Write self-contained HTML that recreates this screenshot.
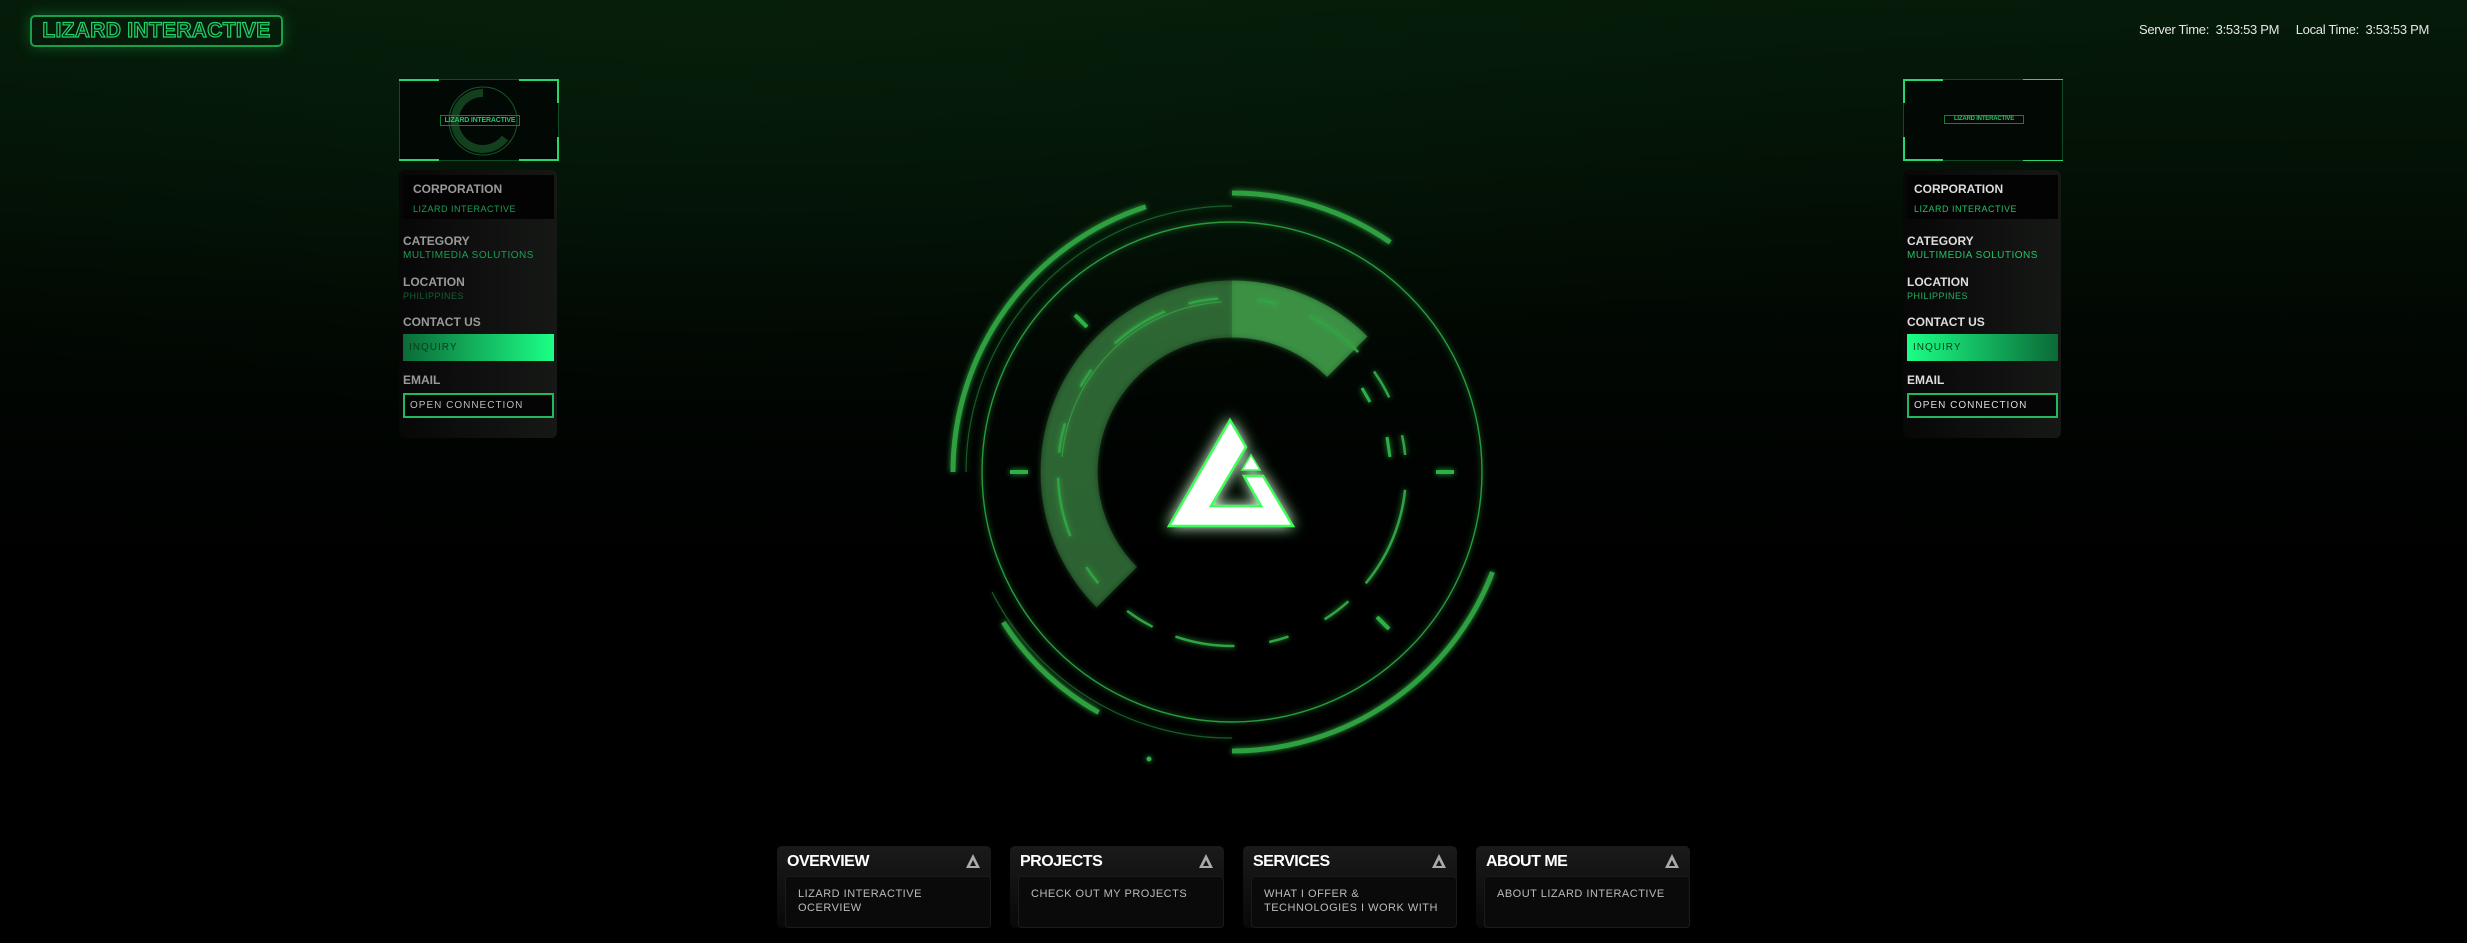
<!DOCTYPE html>
<html><head><meta charset="utf-8"><style>
*{margin:0;padding:0;box-sizing:border-box}
html,body{width:2467px;height:943px;overflow:hidden}
body{background:radial-gradient(ellipse 1400px 420px at 30% 0%,#0a2a0e 0%,#04160a 40%,#010501 80%,#000 100%),#000;font-family:"Liberation Sans",sans-serif;position:relative;color:#ccc}
.bg2{position:absolute;left:0;top:0;width:2467px;height:943px;background:linear-gradient(180deg,rgba(6,30,10,.9) 0%,rgba(2,12,4,.6) 35%,rgba(0,0,0,1) 60%)}
.logo{position:absolute;left:30px;top:15px;width:253px;height:32px;border:2px solid #1aa04a;border-radius:5px;box-shadow:0 0 14px rgba(30,200,90,.35);color:transparent;-webkit-text-stroke:1.2px #22d16a;font-weight:700;font-size:21px;line-height:28px;text-align:center;letter-spacing:0.3px}
.clock{position:absolute;right:38px;top:22px;font-size:13px;color:#e6e6e6;letter-spacing:-.3px}
.thumb{position:absolute;width:160px;height:82px;top:79px;border:1px solid #0f4a22;background:#020803}
.thumb .c{position:absolute;width:40px;height:24px;border-color:#28d670;border-style:solid;border-width:0}
.thumb .t{position:absolute;left:40px;top:35px;width:80px;height:11px;border:1px solid #1a7a3c;font-size:7px;line-height:9px;color:#2bc166;text-align:center;font-weight:700;letter-spacing:-.2px}
.card{position:absolute;width:158px;height:268px;top:170px;border-radius:6px;background:linear-gradient(90deg,#070707,#161816);}
.lab{position:absolute;left:4px;font-size:12px;font-weight:700;color:#9a9a9a}
.val{position:absolute;left:4px;font-size:10px;color:#1c9e55;letter-spacing:.5px}
.corp{position:absolute;left:4px;top:5px;width:151px;height:44px;background:#030303}
.btn1{position:absolute;left:4px;top:164px;width:151px;height:27px;background:linear-gradient(90deg,#0b6a37,#1bff86);font-size:10px;color:#0c3a1e;padding-left:6px;line-height:27px;letter-spacing:1px}
.btn2{position:absolute;left:4px;top:223px;width:151px;height:25px;border:2px solid #22b860;font-size:10px;color:#bbb;padding-left:5px;line-height:21px;letter-spacing:1px;background:#050505}
.r .btn1{background:linear-gradient(90deg,#1bff86,#0b6a37)}
.hud{position:absolute;left:932px;top:172px}
.tile{position:absolute;top:846px;width:214px;height:82px;border-radius:5px;background:linear-gradient(180deg,#1a1a1a,#080808)}
.tile h3{position:absolute;left:10px;top:7px;font-size:16px;color:#fff;font-weight:700;letter-spacing:-.5px}
.tile .in{position:absolute;left:8px;top:30px;right:0;bottom:0;border:1px solid #1b1b1b;border-radius:4px;background:#0a0a0a;padding:10px 12px;font-size:11px;color:#bbb;line-height:14px;letter-spacing:.5px}
.tile svg{position:absolute;right:10px;top:7px}
</style></head><body>
<div class="bg2"></div>
<div class="logo">LIZARD INTERACTIVE</div>
<div class="clock">Server Time:&nbsp; 3:53:53 PM &nbsp;&nbsp;&nbsp; Local Time:&nbsp; 3:53:53 PM</div>

<div class="thumb" style="left:399px"><div class="c" style="left:-1px;top:-1px;border-top-width:2px;border-left-width:0"></div><div class="c" style="right:-1px;top:-1px;border-top-width:2px;border-right-width:2px"></div><div class="c" style="right:-1px;bottom:-1px;border-bottom-width:2px;border-right-width:2px"></div><div class="c" style="left:-1px;bottom:-1px;border-bottom-width:2px"></div>
<svg style="position:absolute;left:45px;top:3px" width="76" height="76"><circle cx="38" cy="38" r="34" fill="none" stroke="#145a28" stroke-width="1"/><path d="M38 10 A28 28 0 1 0 60 55" fill="none" stroke="#12401e" stroke-width="8"/></svg>
<div class="t">LIZARD INTERACTIVE</div></div>
<div class="card" style="left:399px">
<div class="corp"></div>
<div class="lab" style="top:12px;left:14px">CORPORATION</div>
<div class="val" style="top:34px;left:14px;font-size:9px">LIZARD INTERACTIVE</div>
<div class="lab" style="top:64px">CATEGORY</div>
<div class="val" style="top:80px">MULTIMEDIA SOLUTIONS</div>
<div class="lab" style="top:105px">LOCATION</div>
<div class="val" style="top:121px;font-size:9px;color:#165f34">PHILIPPINES</div>
<div class="lab" style="top:145px">CONTACT US</div>
<div class="btn1">INQUIRY</div>
<div class="lab" style="top:203px">EMAIL</div>
<div class="btn2">OPEN CONNECTION</div>
</div>

<div class="thumb" style="left:1903px"><div class="c" style="left:-1px;top:-1px;border-top-width:2px;border-left-width:2px"></div><div class="c" style="right:-1px;top:-1px;border-top-width:1px"></div><div class="c" style="right:-1px;bottom:-1px;border-bottom-width:1px"></div><div class="c" style="left:-1px;bottom:-1px;border-bottom-width:2px;border-left-width:2px"></div>
<div class="t" style="height:9px;font-size:6px;line-height:7px">LIZARD INTERACTIVE</div></div>
<div class="card r" style="left:1903px">
<div class="corp"></div>
<div class="lab" style="top:12px;left:11px;color:#ddd">CORPORATION</div>
<div class="val" style="top:34px;left:11px;font-size:9px;color:#22c466">LIZARD INTERACTIVE</div>
<div class="lab" style="top:64px;color:#ddd">CATEGORY</div>
<div class="val" style="top:80px;color:#22c466">MULTIMEDIA SOLUTIONS</div>
<div class="lab" style="top:105px;color:#ddd">LOCATION</div>
<div class="val" style="top:121px;font-size:9px;color:#22b05e">PHILIPPINES</div>
<div class="lab" style="top:145px;color:#ddd">CONTACT US</div>
<div class="btn1">INQUIRY</div>
<div class="lab" style="top:203px;color:#ddd">EMAIL</div>
<div class="btn2" style="color:#ddd">OPEN CONNECTION</div>
</div>

<svg class="hud" width="600" height="600" viewBox="0 0 600 600">
<defs>
<filter id="g" x="-20%" y="-20%" width="140%" height="140%"><feGaussianBlur stdDeviation="3" result="b"/><feMerge><feMergeNode in="b"/><feMergeNode in="SourceGraphic"/></feMerge></filter>
<filter id="w" x="-60%" y="-60%" width="220%" height="220%"><feGaussianBlur stdDeviation="7" result="b"/><feMerge><feMergeNode in="b"/><feMergeNode in="SourceGraphic"/></feMerge></filter>
</defs>
<g fill="none" filter="url(#g)">
<path d="M300 21 A279 279 0 0 1 458.3 70.3" stroke="#2ea040" stroke-width="5"/>
<path d="M21 300 A279 279 0 0 1 213.8 34.7" stroke="#2ea040" stroke-width="5"/>
<path d="M560.5 400.0 A279 279 0 0 1 300 579" stroke="#2ea040" stroke-width="5"/>
<path d="M71.3 450.3 A275 275 0 0 0 166.7 540.5" stroke="#2ea040" stroke-width="5"/>
<path d="M34 300 A266 266 0 0 1 300 34" stroke="#1b5a25" stroke-width="1.2"/>
<path d="M300 566 A266 266 0 0 1 60 420" stroke="#1b5a25" stroke-width="1.2"/>
<circle cx="300" cy="300" r="250" stroke="#279a3c" stroke-width="1.4"/>
<path d="M184.8 415.2 A163 163 0 0 1 300 137" stroke="rgba(70,160,80,0.38)" stroke-width="57"/>
<path d="M300 137 A163 163 0 0 1 415.3 184.7" stroke="rgba(70,170,80,0.6)" stroke-width="57"/>
<path d="M130 285 A170 170 0 0 1 290 130" stroke="#3cb04e" stroke-width="1.2" opacity=".6"/>
<circle cx="300" cy="300" r="174" stroke="#2fa442" stroke-width="2.5" stroke-dasharray="60 25 30 40 20 35" transform="rotate(20 300 300)"/>
<path d="M78 300 H96 M504 300 H522 M143 143 L155 155 M445 445 L457 457" stroke="#2fb046" stroke-width="4"/>
<path d="M430 216 L438 230 M455 265 L458 285" stroke="#2fb046" stroke-width="3"/>
<circle cx="217" cy="587" r="2.5" fill="#2fb046"/>
</g>
<g filter="url(#w)">
<path fill-rule="evenodd" d="M298 248 L314 275 L279 334 L329 334 L312 304 L331 304 L361 354 L237 354 Z" fill="#fff" stroke="#3cff5a" stroke-width="2.5" stroke-linejoin="miter"/>
<path d="M319 283 L328 298 L310 298 Z" fill="#fff" stroke="#3cff5a" stroke-width="1.5"/>
</g>
</svg>

<div class="tile" style="left:777px"><h3>OVERVIEW</h3><svg width="16" height="16" viewBox="0 0 16 16"><path fill-rule="evenodd" d="M8 1 L15 15 L1 15 Z M8 7 L11 13 L5 13 Z" fill="#aaa"/></svg><div class="in">LIZARD INTERACTIVE<br>OCERVIEW</div></div>
<div class="tile" style="left:1010px"><h3>PROJECTS</h3><svg width="16" height="16" viewBox="0 0 16 16"><path fill-rule="evenodd" d="M8 1 L15 15 L1 15 Z M8 7 L11 13 L5 13 Z" fill="#aaa"/></svg><div class="in">CHECK OUT MY PROJECTS</div></div>
<div class="tile" style="left:1243px"><h3>SERVICES</h3><svg width="16" height="16" viewBox="0 0 16 16"><path fill-rule="evenodd" d="M8 1 L15 15 L1 15 Z M8 7 L11 13 L5 13 Z" fill="#aaa"/></svg><div class="in">WHAT I OFFER &amp;<br>TECHNOLOGIES I WORK WITH</div></div>
<div class="tile" style="left:1476px"><h3>ABOUT ME</h3><svg width="16" height="16" viewBox="0 0 16 16"><path fill-rule="evenodd" d="M8 1 L15 15 L1 15 Z M8 7 L11 13 L5 13 Z" fill="#aaa"/></svg><div class="in">ABOUT LIZARD INTERACTIVE</div></div>
</body></html>
